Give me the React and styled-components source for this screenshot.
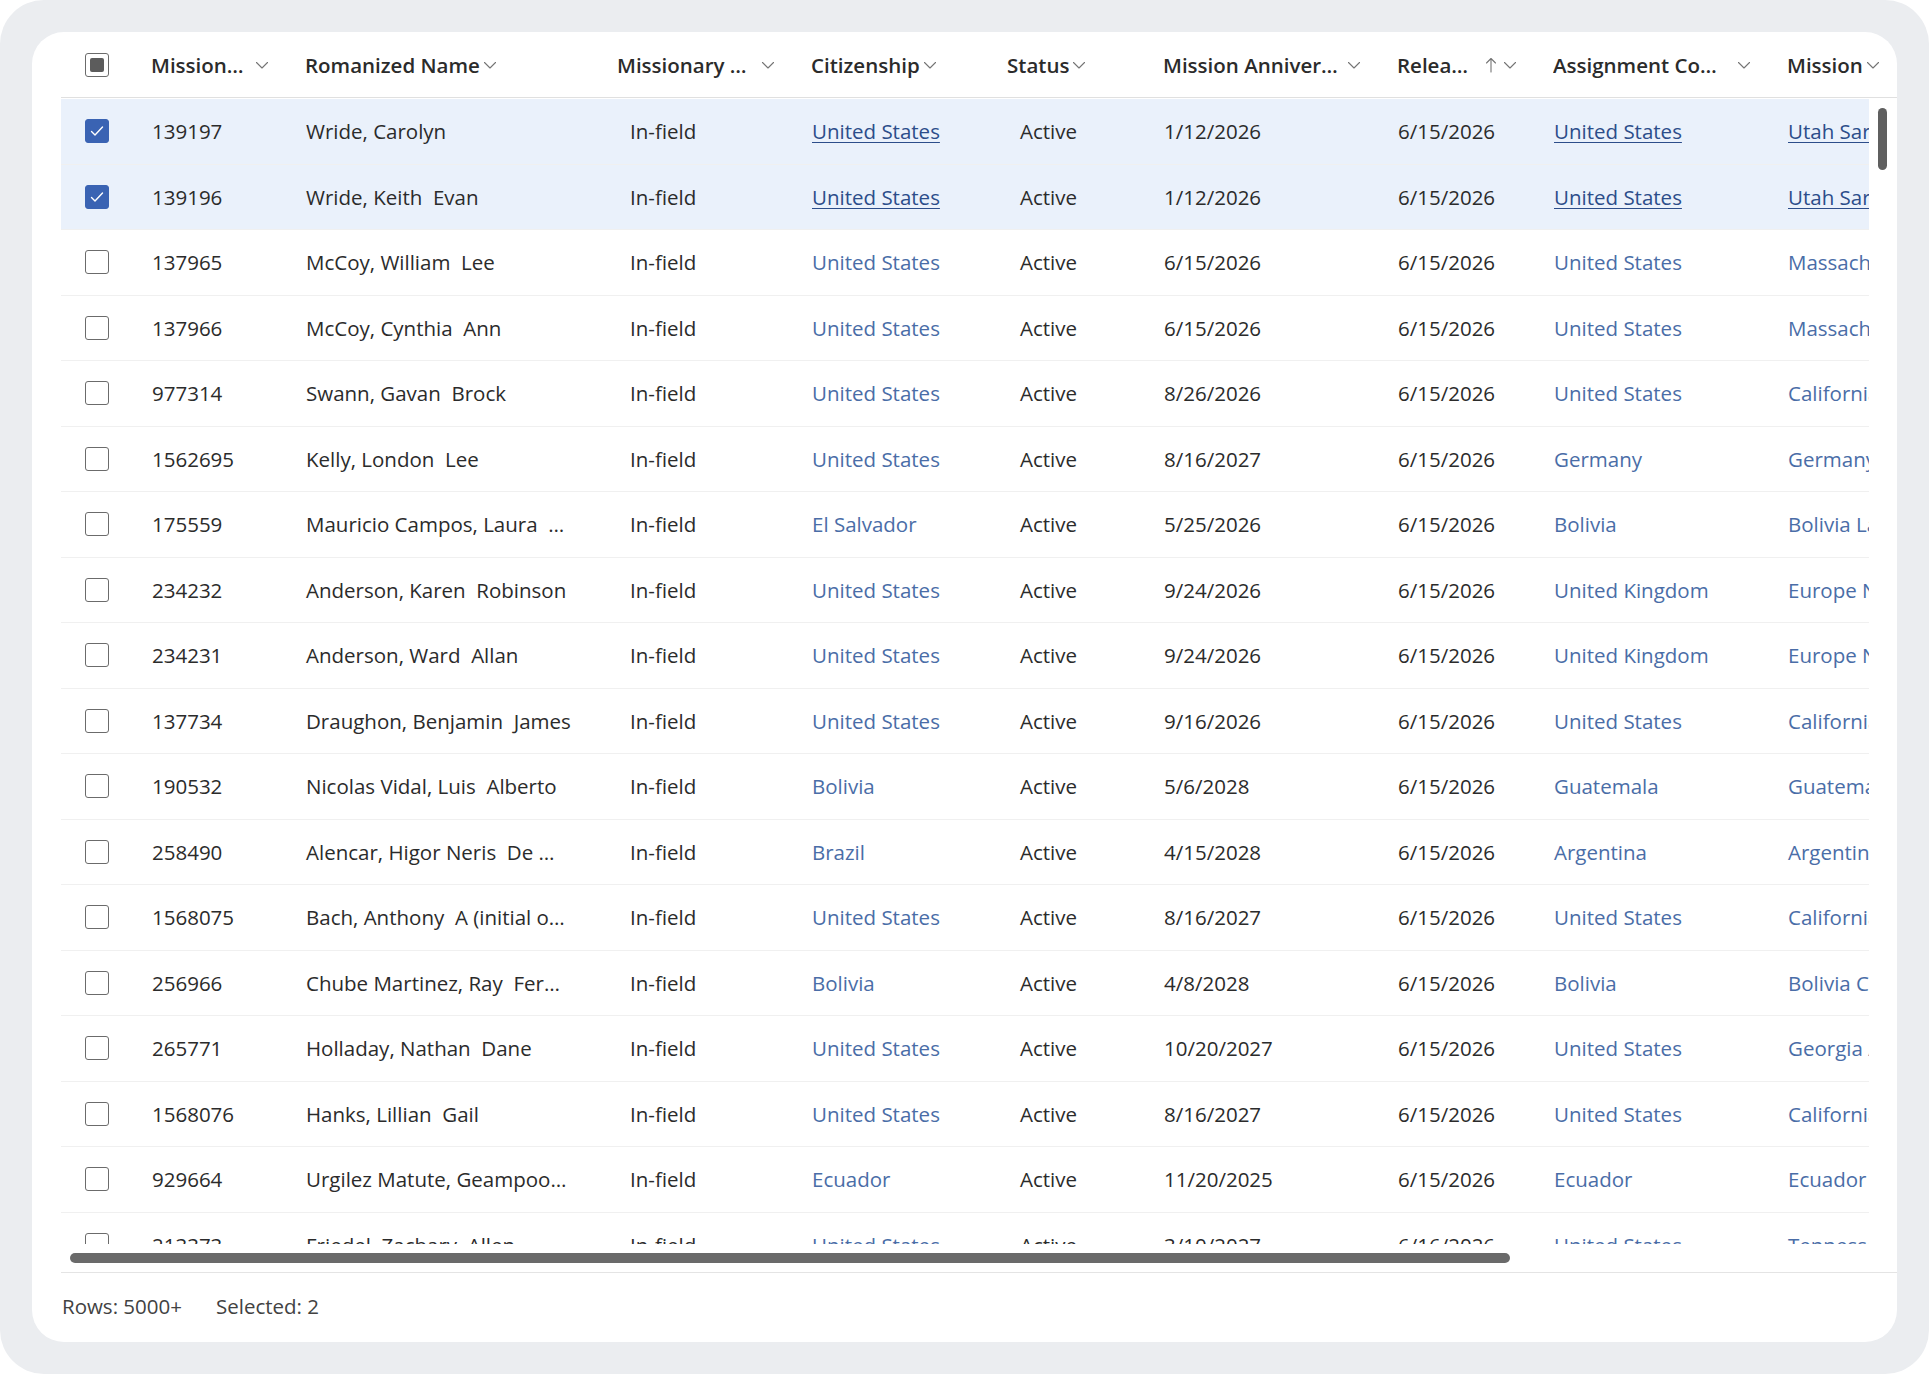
import styled, { createGlobalStyle } from "styled-components";

const GlobalStyle = createGlobalStyle`
  html, body {
    margin: 0;
    padding: 0;
    background: #ffffff;
  }
  body {
    font-family: "Segoe UI", "Open Sans", "Noto Sans", sans-serif;
    color: #242424;
  }
  * { box-sizing: border-box; }
`;

const columns = [
  { key: "check", width: 75 },
  { key: "id", label: "Mission…", title: "Mission Number", width: 154, spread: true },
  { key: "name", label: "Romanized Name", width: 312 },
  { key: "type", label: "Missionary …", title: "Missionary Status", width: 194, spread: true, inset: true },
  { key: "citizenship", label: "Citizenship", width: 196, link: true },
  { key: "status", label: "Status", width: 156, inset: true },
  { key: "anniversary", label: "Mission Anniver…", title: "Mission Anniversary", width: 234, spread: true },
  { key: "release", label: "Relea…", title: "Release Date", width: 156, spread: true, sorted: true },
  { key: "assignment", label: "Assignment Co…", title: "Assignment Country", width: 234, spread: true, link: true },
  { key: "mission", label: "Mission", width: 300, link: true },
];

const template = columns.map((c) => `${c.width}px`).join(" ");

const rows = [
  ["139197", "Wride, Carolyn", "United States", "1/12/2026", "6/15/2026", "United States", "Utah Saratoga Springs Mission", true],
  ["139196", "Wride, Keith  Evan", "United States", "1/12/2026", "6/15/2026", "United States", "Utah Saratoga Springs Mission", true],
  ["137965", "McCoy, William  Lee", "United States", "6/15/2026", "6/15/2026", "United States", "Massachusetts Boston Mission"],
  ["137966", "McCoy, Cynthia  Ann", "United States", "6/15/2026", "6/15/2026", "United States", "Massachusetts Boston Mission"],
  ["977314", "Swann, Gavan  Brock", "United States", "8/26/2026", "6/15/2026", "United States", "California Irvine Mission"],
  ["1562695", "Kelly, London  Lee", "United States", "8/16/2027", "6/15/2026", "Germany", "Germany Berlin Mission"],
  ["175559", "Mauricio Campos, Laura  …", "El Salvador", "5/25/2026", "6/15/2026", "Bolivia", "Bolivia La Paz Mission"],
  ["234232", "Anderson, Karen  Robinson", "United States", "9/24/2026", "6/15/2026", "United Kingdom", "Europe North Area"],
  ["234231", "Anderson, Ward  Allan", "United States", "9/24/2026", "6/15/2026", "United Kingdom", "Europe North Area"],
  ["137734", "Draughon, Benjamin  James", "United States", "9/16/2026", "6/15/2026", "United States", "California Fresno Mission"],
  ["190532", "Nicolas Vidal, Luis  Alberto", "Bolivia", "5/6/2028", "6/15/2026", "Guatemala", "Guatemala City Mission"],
  ["258490", "Alencar, Higor Neris  De …", "Brazil", "4/15/2028", "6/15/2026", "Argentina", "Argentina Salta Mission"],
  ["1568075", "Bach, Anthony  A (initial o…", "United States", "8/16/2027", "6/15/2026", "United States", "California Roseville Mission"],
  ["256966", "Chube Martinez, Ray  Fer…", "Bolivia", "4/8/2028", "6/15/2026", "Bolivia", "Bolivia Cochabamba Mission"],
  ["265771", "Holladay, Nathan  Dane", "United States", "10/20/2027", "6/15/2026", "United States", "Georgia Atlanta Mission"],
  ["1568076", "Hanks, Lillian  Gail", "United States", "8/16/2027", "6/15/2026", "United States", "California Roseville Mission"],
  ["929664", "Urgilez Matute, Geampoo…", "Ecuador", "11/20/2025", "6/15/2026", "Ecuador", "Ecuador Quito Mission"],
  ["213373", "Friedel, Zachary  Allen", "United States", "3/10/2027", "6/16/2026", "United States", "Tennessee Nashville Mission"],
];

const Frame = styled.div`
  width: 1929px;
  height: 1374px;
  padding: 32px;
  background: #ebedf0;
  border-radius: 44px;
`;

const Card = styled.section`
  height: 1310px;
  display: flex;
  flex-direction: column;
  background: #ffffff;
  border-radius: 32px;
  padding-left: 29px;
  overflow: hidden;
`;

const HeaderRow = styled.div`
  flex: none;
  height: 66px;
  display: grid;
  grid-template-columns: ${(p) => p.$cols};
  align-items: center;
  border-bottom: 1px solid #e0e0e0;
  overflow: hidden;
`;

const HeaderCell = styled.div`
  display: flex;
  align-items: center;
  gap: 2px;
  min-width: 0;
  padding: 0 20px 0 15px;
  font-size: 20.5px;
  font-weight: 600;
  white-space: nowrap;
  color: #2b2b2b;
  justify-content: ${(p) => (p.$spread ? "space-between" : "flex-start")};
`;

const HeaderLabel = styled.span`
  overflow: hidden;
`;

const HeaderIcons = styled.span`
  display: flex;
  align-items: center;
  gap: 4px;
  flex: none;
  color: #757575;
`;

const CheckCell = styled.div`
  display: flex;
  align-items: center;
  padding-left: 24px;
`;

const Box = styled.span`
  width: 24px;
  height: 24px;
  display: flex;
  align-items: center;
  justify-content: center;
  border-radius: 3px;
  border: 1.5px solid ${(p) => (p.$checked ? "#3a63b3" : "#6b6b6b")};
  background: ${(p) => (p.$checked ? "#3a63b3" : "#ffffff")};
`;

const Mixed = styled.span`
  width: 14px;
  height: 14px;
  border-radius: 2px;
  background: #5c5c5c;
`;

const BodyArea = styled.div`
  flex: none;
  height: 1146px;
  display: flex;
`;

const Viewport = styled.div`
  width: 1808px;
  flex: none;
  overflow: hidden;
  padding-top: 1px;
`;

const Row = styled.div`
  height: 65.5px;
  display: grid;
  grid-template-columns: ${(p) => p.$cols};
  align-items: center;
  border-bottom: 1px solid #f0f0f0;
  background: ${(p) => (p.$selected ? "#eaf1fb" : "#ffffff")};
`;

const Cell = styled.div`
  min-width: 0;
  overflow: hidden;
  white-space: pre;
  font-size: 20.5px;
  padding-left: ${(p) => (p.$inset ? 28 : 16)}px;
  color: #2b2b2b;
`;

const Link = styled.span`
  color: ${(p) => (p.$selected ? "#2c4d8a" : "#4a6da7")};
  text-decoration: ${(p) => (p.$selected ? "underline" : "none")};
  text-underline-offset: 3px;
  text-decoration-thickness: 1px;
`;

const VTrack = styled.div`
  flex: 1;
  padding: 10px 0 0 9px;
`;

const VThumb = styled.div`
  width: 9px;
  height: 62px;
  border-radius: 5px;
  background: #5f5f5f;
`;

const HTrack = styled.div`
  flex: none;
  height: 29px;
  padding: 9px 0 0 9px;
  border-bottom: 1px solid #e4e4e4;
`;

const HThumb = styled.div`
  width: 1440px;
  height: 10px;
  border-radius: 5px;
  background: #6a6a6a;
`;

const Footer = styled.footer`
  flex: 1;
  display: flex;
  align-items: center;
  gap: 34px;
  padding: 0 0 4px 1px;
  font-size: 20.5px;
  color: #424242;
`;

const Chevron = () => (
  <svg width="16" height="16" viewBox="0 0 16 16" fill="none">
    <path d="M2.5 5.5 L8 11 L13.5 5.5" stroke="currentColor" strokeWidth="1.1" strokeLinecap="round" strokeLinejoin="round" />
  </svg>
);

const SortUp = () => (
  <svg width="14" height="18" viewBox="0 0 14 18" fill="none">
    <path d="M7 16 V2.5 M2.5 7 L7 2.5 L11.5 7" stroke="currentColor" strokeWidth="1.1" strokeLinecap="round" strokeLinejoin="round" />
  </svg>
);

const Tick = () => (
  <svg width="18" height="18" viewBox="0 0 18 18" fill="none">
    <path d="M3.5 9.5 L7 13 L14.5 5" stroke="#ffffff" strokeWidth="1.4" strokeLinecap="round" strokeLinejoin="round" />
  </svg>
);

const Checkbox = ({ checked, mixed }) => (
  <Box $checked={checked}>
    {checked && <Tick />}
    {mixed && <Mixed />}
  </Box>
);

const GridHeader = () => (
  <HeaderRow $cols={template}>
    {columns.map((c) =>
      c.key === "check" ? (
        <CheckCell key={c.key}>
          <Checkbox mixed />
        </CheckCell>
      ) : (
        <HeaderCell key={c.key} $spread={c.spread} title={c.title || c.label}>
          <HeaderLabel>{c.label}</HeaderLabel>
          <HeaderIcons>
            {c.sorted && <SortUp />}
            <Chevron />
          </HeaderIcons>
        </HeaderCell>
      )
    )}
  </HeaderRow>
);

const GridRow = ({ data }) => {
  const [id, name, citizenship, anniversary, release, assignment, mission, selected] = data;
  return (
    <Row $cols={template} $selected={selected}>
      <CheckCell>
        <Checkbox checked={selected} />
      </CheckCell>
      <Cell>{id}</Cell>
      <Cell>{name}</Cell>
      <Cell $inset>In-field</Cell>
      <Cell>
        <Link $selected={selected}>{citizenship}</Link>
      </Cell>
      <Cell $inset>Active</Cell>
      <Cell>{anniversary}</Cell>
      <Cell>{release}</Cell>
      <Cell>
        <Link $selected={selected}>{assignment}</Link>
      </Cell>
      <Cell>
        <Link $selected={selected}>{mission}</Link>
      </Cell>
    </Row>
  );
};

const App = () => {
  const selectedCount = rows.filter((r) => r[7]).length;
  return (
    <>
      <GlobalStyle />
      <Frame>
        <Card>
          <GridHeader />
          <BodyArea>
            <Viewport>
              {rows.map((r) => (
                <GridRow key={r[0]} data={r} />
              ))}
            </Viewport>
            <VTrack>
              <VThumb />
            </VTrack>
          </BodyArea>
          <HTrack>
            <HThumb />
          </HTrack>
          <Footer>
            <span>Rows: 5000+</span>
            <span>Selected: {selectedCount}</span>
          </Footer>
        </Card>
      </Frame>
    </>
  );
};

export default App;
